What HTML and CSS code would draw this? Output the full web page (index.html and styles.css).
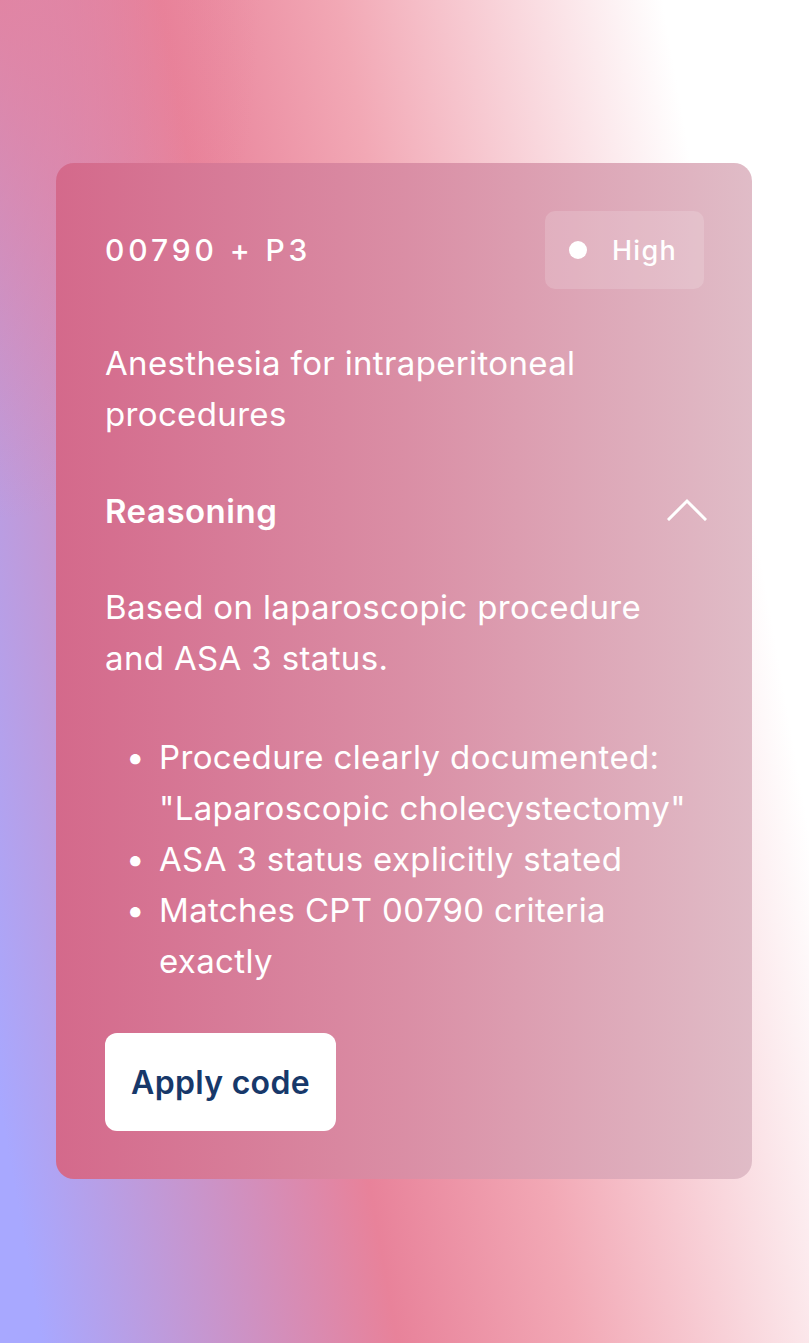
FILE: index.html
```html
<!DOCTYPE html>
<html lang="en">
<head>
<meta charset="utf-8">
<title>Code suggestion</title>
<link rel="stylesheet" href="styles.css">
</head>
<body>
<div class="page">
  <section class="card">
    <header class="card-head">
      <h2 class="code">00790 + P3</h2>
      <span class="pill"><span class="dot"></span>High</span>
    </header>
    <p class="desc">Anesthesia for intraperitoneal procedures</p>
    <div class="reason-head">
      <span class="reason-title">Reasoning</span>
      <svg class="chevron" width="40" height="24" viewBox="0 0 40 24" aria-hidden="true">
        <path d="M2 22 L20 4 L38 22" fill="none" stroke="#fff" stroke-width="3" stroke-linecap="square" stroke-linejoin="miter"/>
      </svg>
    </div>
    <p class="reason-text">Based on laparoscopic procedure and ASA 3 status.</p>
    <ul class="reason-list">
      <li>Procedure clearly documented: "Laparoscopic cholecystectomy"</li>
      <li>ASA 3 status explicitly stated</li>
      <li>Matches CPT 00790 criteria exactly</li>
    </ul>
    <button class="apply">Apply code</button>
  </section>
</div>
</body>
</html>
```
FILE: styles.css
```css
html, body {
  margin: 0;
  padding: 0;
}
body {
  width: 809px;
  height: 1343px;
  overflow: hidden;
  font-family: Inter, "Noto Sans", sans-serif;
  background:
    radial-gradient(ellipse 260px 520px at 0 0, rgba(232, 128, 152, 0.75), rgba(232, 128, 152, 0) 100%),
    linear-gradient(80deg, #a8a8ff 4%, #e8829a 38%, #f2a8b5 55%, #ffffff 86%);
}
.page {
  padding: 163px 57px 0 56px;
}
.card {
  box-sizing: border-box;
  width: 696px;
  padding: 48px 48px 48px 49px;
  border-radius: 18px;
  background: linear-gradient(90deg, #d4698b 0%, #da8ea5 50%, #e0bcc7 100%);
  color: #fff;
  display: flex;
  flex-direction: column;
  align-items: flex-start;
}
.card-head {
  align-self: stretch;
  display: flex;
  justify-content: space-between;
  align-items: center;
}
.code {
  margin: 0;
  font-size: 30px;
  font-weight: 500;
  letter-spacing: 3.9px;
}
.pill {
  display: flex;
  align-items: center;
  gap: 25px;
  height: 78px;
  box-sizing: border-box;
  padding: 0 27px 0 24px;
  border-radius: 10px;
  background: rgba(255, 255, 255, 0.16);
  font-size: 27px;
  font-weight: 500;
  letter-spacing: 1.3px;
}
.dot {
  width: 18px;
  height: 18px;
  border-radius: 50%;
  background: #fff;
}
.desc {
  margin: 49px 0 0;
  font-size: 33px;
  line-height: 51px;
  letter-spacing: 0.35px;
  font-weight: 400;
}
.reason-head {
  align-self: stretch;
  margin-top: 45px;
  display: flex;
  justify-content: space-between;
  align-items: center;
  height: 51px;
}
.reason-title {
  font-size: 33px;
  font-weight: 600;
  letter-spacing: 0.5px;
}
.chevron {
  margin-right: -3px;
  margin-top: -4px;
}
.reason-text {
  margin: 46px 0 0;
  font-size: 33px;
  line-height: 51px;
  letter-spacing: 0.35px;
  max-width: 560px;
}
.reason-list {
  margin: 48px 0 0;
  padding: 0 0 0 54px;
  list-style: none;
  font-size: 33px;
  line-height: 51px;
  letter-spacing: 0.35px;
}
.reason-list li::before {
  content: "\2022";
  display: inline-block;
  width: 33px;
  margin-left: -33px;
}
.apply {
  margin-top: 46px;
  width: 231px;
  height: 98px;
  border: 0;
  border-radius: 12px;
  background: #fff;
  color: #17386a;
  font-family: Inter, "Noto Sans", sans-serif;
  font-size: 32px;
  font-weight: 600;
  letter-spacing: 0.3px;
  padding: 0;
}
```
